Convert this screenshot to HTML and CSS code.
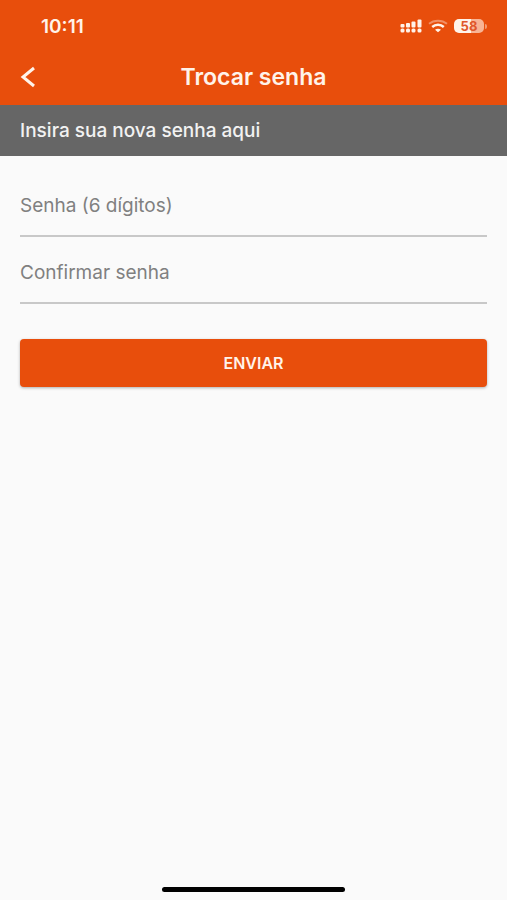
FILE: index.html
```html
<!DOCTYPE html>
<html lang="pt-BR">
<head>
<meta charset="utf-8">
<meta name="viewport" content="width=device-width, initial-scale=1">
<title>Trocar senha</title>
<link rel="stylesheet" href="styles.css">
</head>
<body>
<header class="header">
  <div class="status">
    <time class="clock">10:11</time>
    <div class="indicators">
      <svg class="signal" width="22" height="14" viewBox="0 0 22 14" aria-hidden="true">
        <g fill="#fff3ea">
          <rect x="0.500" y="5" width="4" height="3.500" rx="1"/>
          <rect x="6" y="4" width="4" height="4.500" rx="1"/>
          <rect x="11.500" y="2.500" width="4" height="6" rx="1"/>
          <rect x="17.500" y="0.500" width="4" height="8" rx="1"/>
          <rect x="0.500" y="9.500" width="4" height="4" rx="1.500"/>
          <rect x="6" y="9.500" width="4" height="4" rx="1.500"/>
          <rect x="11.500" y="9.500" width="4" height="4" rx="1.500"/>
          <rect x="17.500" y="9.500" width="4" height="4" rx="1.500"/>
        </g>
      </svg>
      <svg class="wifi" width="20" height="14" viewBox="0 0 20 14" aria-hidden="true">
        <g fill="none" stroke="#fff3ea">
          <path d="M1 4.800C6 .6 14 .6 19 4.800" stroke-width="2" opacity=".4"/>
          <path d="M4.200 8C7.400 5 12.600 5 15.800 8" stroke-width="2.400"/>
        </g>
        <path d="M7 10.700C8.600 9.300 11.400 9.300 13 10.700L10 13.300z" fill="#fff3ea"/>
      </svg>
      <div class="battery"><span class="level">58</span></div>
    </div>
  </div>
  <div class="titlebar">
    <button class="back" type="button" aria-label="Voltar">
      <svg width="16" height="22" viewBox="0 0 16 22" aria-hidden="true">
        <path d="M14 2L3 11L14 20" fill="none" stroke="#fff3ea" stroke-width="3"/>
      </svg>
    </button>
    <h1 class="title">Trocar senha</h1>
  </div>
</header>
<p class="notice">Insira sua nova senha aqui</p>
<main class="main">
  <form class="form">
    <input class="field" type="password" inputmode="numeric" maxlength="6" placeholder="Senha (6 dígitos)" aria-label="Senha (6 dígitos)">
    <input class="field" type="password" inputmode="numeric" maxlength="6" placeholder="Confirmar senha" aria-label="Confirmar senha">
    <button class="submit" type="submit">ENVIAR</button>
  </form>
</main>
<footer class="footer"><div class="home-bar"></div></footer>
</body>
</html>
```
FILE: styles.css
```css
* {
  box-sizing: border-box;
}

body {
  margin: 0;
  min-height: 100vh;
  display: flex;
  flex-direction: column;
  background: #fafafa;
  font-family: Inter, "Liberation Sans", sans-serif;
}

.header {
  background: #e84e0c;
  color: #fff3ea;
}

.status {
  display: flex;
  align-items: center;
  justify-content: space-between;
  height: 52px;
  padding: 0 20px 0 41px;
}

.clock {
  font-size: 19px;
  font-weight: 600;
}

.indicators {
  display: flex;
  align-items: center;
  gap: 6px;
}

.battery {
  display: flex;
  align-items: center;
  gap: 1px;
}

.battery::after {
  content: "";
  width: 2px;
  height: 5px;
  border-radius: 0 2px 2px 0;
  background: #f39a70;
}

.level {
  width: 30px;
  border-radius: 5px;
  background: linear-gradient(to right, #fff3ea 58%, #f8b494 58%);
  color: #e0562a;
  font-size: 13px;
  font-weight: 700;
  line-height: 14px;
  text-align: center;
}

.titlebar {
  display: grid;
  grid-template-columns: 32px 1fr 32px;
  align-items: center;
  height: 53px;
  padding: 0 20px 4px;
}

.back {
  display: flex;
  padding: 0;
  border: 0;
  background: none;
}

.title {
  margin: 0;
  font-size: 23px;
  font-weight: 600;
  line-height: 28px;
  text-align: center;
}

.notice {
  margin: 0;
  padding: 0 20px;
  background: #666;
  color: #f2f2f2;
  font-size: 19px;
  font-weight: 500;
  line-height: 51px;
}

.main {
  flex: 1;
  padding: 20px;
}

.form {
  display: flex;
  flex-direction: column;
}

.field {
  width: 100%;
  height: 61px;
  margin-bottom: 6px;
  padding: 0;
  border: 0;
  border-bottom: 2px solid #c8c8c8;
  border-radius: 0;
  outline: 0;
  background: none;
  color: #333;
  font-family: inherit;
  font-size: 19px;
}

.field::placeholder {
  color: #808080;
  opacity: 1;
}

.submit {
  height: 48px;
  margin-top: 29px;
  border: 0;
  border-radius: 4px;
  background: #e84e0c;
  box-shadow: 0 1px 3px rgba(0, 0, 0, 0.3);
  color: #fff3ea;
  font-family: inherit;
  font-size: 16px;
  font-weight: 600;
}

.footer {
  padding-bottom: 8px;
}

.home-bar {
  width: 36%;
  height: 5px;
  margin: 0 auto;
  border-radius: 3px;
  background: #000;
}
```
